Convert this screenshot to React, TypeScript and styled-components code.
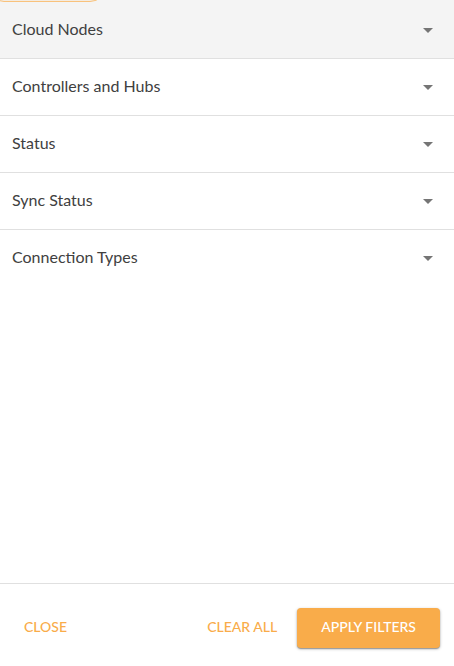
import React from "react";
import styled, { createGlobalStyle } from "styled-components";

const GlobalStyle = createGlobalStyle`
  * { box-sizing: border-box; }
  body {
    margin: 0;
    background: #fff;
    color: #404040;
    font-family: Lato, "Open Sans", sans-serif;
  }
`;

const Panel = styled.main`
  display: flex;
  flex-direction: column;
  min-height: 100vh;
`;

const ChipStrip = styled.div`
  display: flex;
  align-items: flex-end;
  height: 2px;
  overflow: hidden;
  background: #f4f4f4;
`;

const Chip = styled.div`
  flex: none;
  width: 118px;
  height: 32px;
  margin-left: -12px;
  border: 1px solid #f9c27c;
  border-radius: 16px;
  background: #f4ece1;
`;

const FilterList = styled.ul`
  flex: 1;
  margin: 0;
  padding: 0;
  list-style: none;
`;

const FilterItem = styled.li`
  & + & {
    border-top: 1px solid #e0e0e0;
  }
  &:first-child {
    background: #f4f4f4;
  }
`;

const FilterButton = styled.button`
  display: flex;
  align-items: center;
  justify-content: space-between;
  width: 100%;
  height: 56px;
  padding: 0 14px 0 12px;
  border: 0;
  background: transparent;
  color: #404040;
  font: 400 16px/24px Lato, "Open Sans", sans-serif;
  text-align: left;
  cursor: pointer;
`;

const FilterName = styled.span`
  padding-bottom: 2px;
`;

const Arrow = styled.svg`
  width: 24px;
  height: 24px;
  fill: #757575;
`;

const Footer = styled.footer`
  display: flex;
  align-items: center;
  gap: 8px;
  padding: 24px 14px 18px 12px;
  border-top: 1px solid #e0e0e0;
`;

const Action = styled.button<{ $primary?: boolean }>`
  height: 40px;
  padding: 0 ${({ $primary }) => ($primary ? 24 : 12)}px 2px;
  border: 0;
  border-radius: 4px;
  background: ${({ $primary }) => ($primary ? "#f9ac4a" : "transparent")};
  box-shadow: ${({ $primary }) =>
    $primary ? "0 1px 3px rgba(0, 0, 0, 0.3), 0 1px 1px rgba(0, 0, 0, 0.25)" : "none"};
  color: ${({ $primary }) => ($primary ? "#fff" : "#f9ac4a")};
  font: 500 14px/24px Lato, "Open Sans", sans-serif;
  text-transform: uppercase;
  white-space: nowrap;
  cursor: pointer;
`;

const Spacer = styled.div`
  flex: 1;
`;

const filters = ["Cloud Nodes", "Controllers and Hubs", "Status", "Sync Status", "Connection Types"];

export default function App() {
  return (
    <>
      <GlobalStyle />
      <Panel>
        <ChipStrip aria-hidden="true">
          <Chip />
        </ChipStrip>
        <FilterList>
          {filters.map((name) => (
            <FilterItem key={name}>
              <FilterButton type="button" aria-expanded={false}>
                <FilterName>{name}</FilterName>
                <Arrow viewBox="0 0 24 24" aria-hidden="true">
                  <path d="M7 10l5 5 5-5z" />
                </Arrow>
              </FilterButton>
            </FilterItem>
          ))}
        </FilterList>
        <Footer>
          <Action type="button">Close</Action>
          <Spacer />
          <Action type="button">Clear all</Action>
          <Action type="button" $primary>Apply filters</Action>
        </Footer>
      </Panel>
    </>
  );
}
